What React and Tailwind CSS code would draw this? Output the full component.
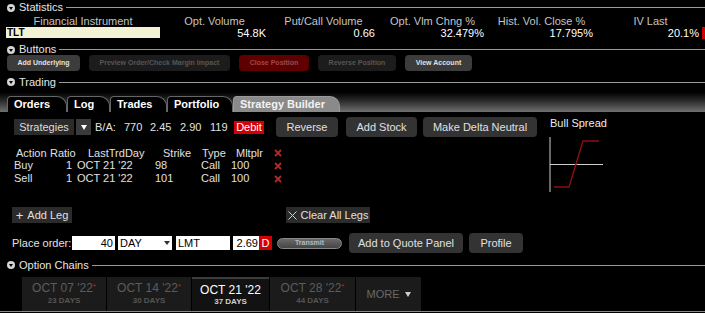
import React from 'react'

const stats = [
  ['Opt. Volume', '54.8K'],
  ['Put/Call Volume', '0.66'],
  ['Opt. Vlm Chng %', '32.479%'],
  ['Hist. Vol. Close %', '17.795%'],
]

const topButtons = [
  { label: 'Add Underlying', w: 'w-[73px]', cls: 'bg-[#3c3c3c] text-[#e0e0e0]' },
  { label: 'Preview Order/Check Margin Impact', w: 'w-[141px]', cls: 'bg-[#1c1c1c] text-[#565656]' },
  { label: 'Close Position', w: 'w-[70px]', cls: 'bg-[#5e0000] text-[#a04848]' },
  { label: 'Reverse Position', w: 'w-[78px]', cls: 'bg-[#1c1c1c] text-[#565656]' },
  { label: 'View Account', w: 'w-[67px]', cls: 'bg-[#3c3c3c] text-[#e0e0e0]' },
]

const tabs = [
  { label: 'Orders', w: 'w-[60px]' },
  { label: 'Log', w: 'w-[43px]' },
  { label: 'Trades', w: 'w-[57px]' },
  { label: 'Portfolio', w: 'w-[66px]' },
  { label: 'Strategy Builder', w: 'w-[107px]', active: true },
]

const legs = [
  { action: 'Buy', strike: '98' },
  { action: 'Sell', strike: '101' },
]

const expiries = [
  { date: "OCT 07 '22", days: '23 DAYS', w: 'w-[84px]' },
  { date: "OCT 14 '22", days: '30 DAYS', w: 'w-[84px]' },
  { date: "OCT 21 '22", days: '37 DAYS', w: 'w-[77px]', active: true },
  { date: "OCT 28 '22", days: '44 DAYS', w: 'w-[85px]' },
]

function Arrow() {
  return (
    <span className="flex h-[8px] w-[8px] items-center justify-center rounded-full bg-[#d4d4d4]">
      <span className="mt-[1px] h-0 w-0 border-x-[2.5px] border-t-[3px] border-x-transparent border-t-black" />
    </span>
  )
}

function SectionHeader({ title, className = '' }) {
  return (
    <div className={`flex items-center pl-[7px] ${className}`}>
      <Arrow />
      <span className="ml-[4px] text-[11px] leading-none text-[#e6e6e6]">{title}</span>
      <div className="ml-[3px] h-px flex-1 bg-[#9a9a9a]" />
    </div>
  )
}

function RedX() {
  return (
    <svg width="8" height="8" viewBox="0 0 8 8">
      <path d="M1 1L7 7M7 1L1 7" stroke="#b02a2a" strokeWidth="1.8" />
    </svg>
  )
}

function Triangle({ color = 'border-t-white' }) {
  return <span className={`h-0 w-0 border-x-[3.5px] border-t-[5px] border-x-transparent ${color}`} />
}

export default function App() {
  return (
    <div className="flex h-[313px] w-[705px] flex-col overflow-hidden bg-black font-['Liberation_Sans',Arial,sans-serif] text-[#e0e0e0]">
      <SectionHeader title="Statistics" className="h-[15px]" />

      <div className="grid h-[12px] grid-cols-[154px_109px_109px_109px_109px_109px] pl-[6px] text-[11px] leading-[12px] text-[#c4c4c4]">
        <div className="text-center">Financial Instrument</div>
        {stats.map(([label]) => (
          <div key={label} className="text-center">{label}</div>
        ))}
        <div className="text-center">IV Last</div>
      </div>

      <div className="grid h-[12px] grid-cols-[154px_109px_109px_109px_109px_109px] pl-[6px] text-[11px] leading-[12px] text-white">
        <div className="h-[11px] bg-[#f4f2d4] pl-[1px] text-[10px] font-semibold leading-[11px] text-black">TLT</div>
        {stats.map(([label, value]) => (
          <div key={label} className="pr-[3px] text-right">{value}</div>
        ))}
        <div className="flex items-center justify-end">
          <span>20.1%</span>
          <span className="ml-[3px] h-[12px] w-[3px] bg-[#c80000]" />
        </div>
      </div>

      <SectionHeader title="Buttons" className="mt-[5px] h-[11px]" />

      <div className="flex h-[16px] gap-[9px] pl-[7px]">
        {topButtons.map((b) => (
          <div key={b.label} className={`flex items-center justify-center rounded-[4px] text-[7px] font-bold ${b.w} ${b.cls}`}>
            {b.label}
          </div>
        ))}
      </div>

      <SectionHeader title="Trading" className="mt-[5px] h-[12px]" />

      <div className="flex h-[24px] items-end bg-linear-to-b from-black to-[#707070] pl-[7px]">
        {tabs.map((t) => (
          <div
            key={t.label}
            className={`flex h-[16px] items-center rounded-tl-[4px] rounded-tr-[10px] border-x border-t pl-[6px] text-[11px] font-bold ${t.w} ${
              t.active ? 'border-[#9a9a9a] bg-[#8a8a8a] text-[#f2f2f2]' : 'border-[#666] bg-black text-white'
            }`}
          >
            {t.label}
          </div>
        ))}
      </div>

      <div className="flex h-[146px]">
        <div className="w-[549px] pl-[12px] pt-[5px] text-[11px] text-[#e0e0e0]">
          <div className="flex h-[20px] items-center">
            <div className="ml-[2px] flex h-[16px] w-[60px] items-center justify-center bg-[#2b2b2b] text-[#dcdcdc]">Strategies</div>
            <div className="ml-[2px] flex h-[16px] w-[15px] items-center justify-center bg-[#3a3a3a]">
              <Triangle />
            </div>
            <span className="ml-[4px] w-[29px]">B/A:</span>
            <span className="w-[26px]">770</span>
            <span className="w-[30px]">2.45</span>
            <span className="w-[30px]">2.90</span>
            <span className="w-[24px]">119</span>
            <span className="flex h-[13px] w-[30px] items-center justify-center bg-[#d40000] text-white">Debit</span>
            <div className="ml-[12px] flex h-[20px] w-[62px] items-center justify-center rounded-[4px] bg-[#333]">Reverse</div>
            <div className="ml-[8px] flex h-[20px] w-[71px] items-center justify-center rounded-[4px] bg-[#333]">Add Stock</div>
            <div className="ml-[6px] flex h-[20px] w-[114px] items-center justify-center rounded-[4px] bg-[#333]">Make Delta Neutral</div>
          </div>

          <div className="ml-[4px] mt-[10px] flex h-[12px] items-center">
            <span className="w-[34px]">Action</span>
            <span className="w-[38px]">Ratio</span>
            <span className="w-[75px]">LastTrdDay</span>
            <span className="w-[39px]">Strike</span>
            <span className="w-[34px]">Type</span>
            <span className="w-[38px]">Mltplr</span>
            <RedX />
          </div>

          {legs.map((leg) => (
            <div key={leg.action} className="ml-[2px] flex h-[13px] items-center">
              <span className="w-[52px]">{leg.action}</span>
              <span className="w-[11px]">1</span>
              <span className="w-[78px]">OCT 21 '22</span>
              <span className="w-[46px]">{leg.strike}</span>
              <span className="w-[30px]">Call</span>
              <span className="w-[43px]">100</span>
              <RedX />
            </div>
          ))}

          <div className="mt-[22px] flex h-[16px]">
            <div className="flex w-[60px] items-center justify-center gap-[4px] bg-[#2b2b2b]">
              <span className="text-[13px] leading-none">+</span>
              <span>Add Leg</span>
            </div>
            <div className="ml-[214px] flex w-[84px] items-center justify-center gap-[4px] bg-[#2b2b2b]">
              <svg width="9" height="9" viewBox="0 0 9 9">
                <path d="M0.5 0.5L8.5 8.5M8.5 0.5L0.5 8.5" stroke="#d0d0d0" strokeWidth="1" />
              </svg>
              <span>Clear All Legs</span>
            </div>
          </div>

          <div className="mt-[10px] flex h-[20px] items-center">
            <span className="w-[60px]">Place order:</span>
            <div className="flex h-[14px] w-[43px] items-center justify-end bg-white pr-[2px] text-black">40</div>
            <div className="ml-[3px] flex h-[14px] w-[54px] items-center justify-between bg-white px-[2px] text-black">
              <span>DAY</span>
              <span className="h-0 w-0 border-x-[3px] border-t-[4px] border-x-transparent border-t-[#333]" />
            </div>
            <div className="ml-[4px] flex h-[14px] w-[54px] items-center bg-white pl-[2px] text-black">LMT</div>
            <div className="ml-[3px] flex h-[14px] w-[26px] items-center justify-end bg-white pr-[1px] text-black">2.69</div>
            <div className="flex h-[14px] w-[13px] items-center justify-center bg-[#d40000] text-white">D</div>
            <div className="ml-[5px] flex h-[11px] w-[65px] items-center justify-center rounded-full border border-[#8a8a8a] bg-linear-to-b from-[#6a6a6a] to-[#454545] text-[7px] font-bold text-[#b8b8b8]">
              Transmit
            </div>
            <div className="ml-[7px] flex h-[20px] w-[114px] items-center justify-center rounded-[4px] bg-[#333]">Add to Quote Panel</div>
            <div className="ml-[6px] flex h-[20px] w-[54px] items-center justify-center rounded-[4px] bg-[#333]">Profile</div>
          </div>
        </div>

        <div className="flex-1">
          <div className="ml-[1px] mt-[5px] h-[12px] text-[11px] font-medium leading-[12px] text-[#ececec]">Bull Spread</div>
          <svg className="mt-[7px]" width="56" height="58" viewBox="0 0 56 58">
            <path d="M1 1V56" stroke="#cfcfcf" strokeWidth="1" />
            <path d="M1 28.5H54" stroke="#cfcfcf" strokeWidth="1" />
            <path d="M5 51H20L34 5H50" stroke="#8c1010" strokeWidth="1.4" fill="none" />
          </svg>
        </div>
      </div>

      <SectionHeader title="Option Chains" className="mt-[1px] h-[12px]" />

      <div className="mt-[6px] flex h-[34px] gap-[1px] pl-[22px]">
        {expiries.map((e) => (
          <div
            key={e.date}
            className={`flex flex-col items-center justify-center ${e.w} ${
              e.active ? 'border-t-2 border-[#3c3c3c] bg-[#121212]' : 'bg-[#1b1b1b]'
            }`}
          >
            <div className={`text-[12px] leading-[13px] ${e.active ? 'text-white' : 'text-[#5c5c5c]'}`}>
              {e.date}
              {!e.active && <span className="relative -top-[3px] text-[8px] text-[#c02020]">*</span>}
            </div>
            <div className={`text-[8px] font-semibold leading-[10px] ${e.active ? 'text-[#d0d0d0]' : 'text-[#555]'}`}>{e.days}</div>
          </div>
        ))}
        <div className="flex w-[65px] items-center justify-center gap-[5px] bg-[#1b1b1b] text-[11px] text-[#6a6a6a]">
          <span>MORE</span>
          <Triangle color="border-t-[#cfcfcf]" />
        </div>
      </div>

      <div className="h-px bg-[#8a8a8a]" />
    </div>
  )
}
